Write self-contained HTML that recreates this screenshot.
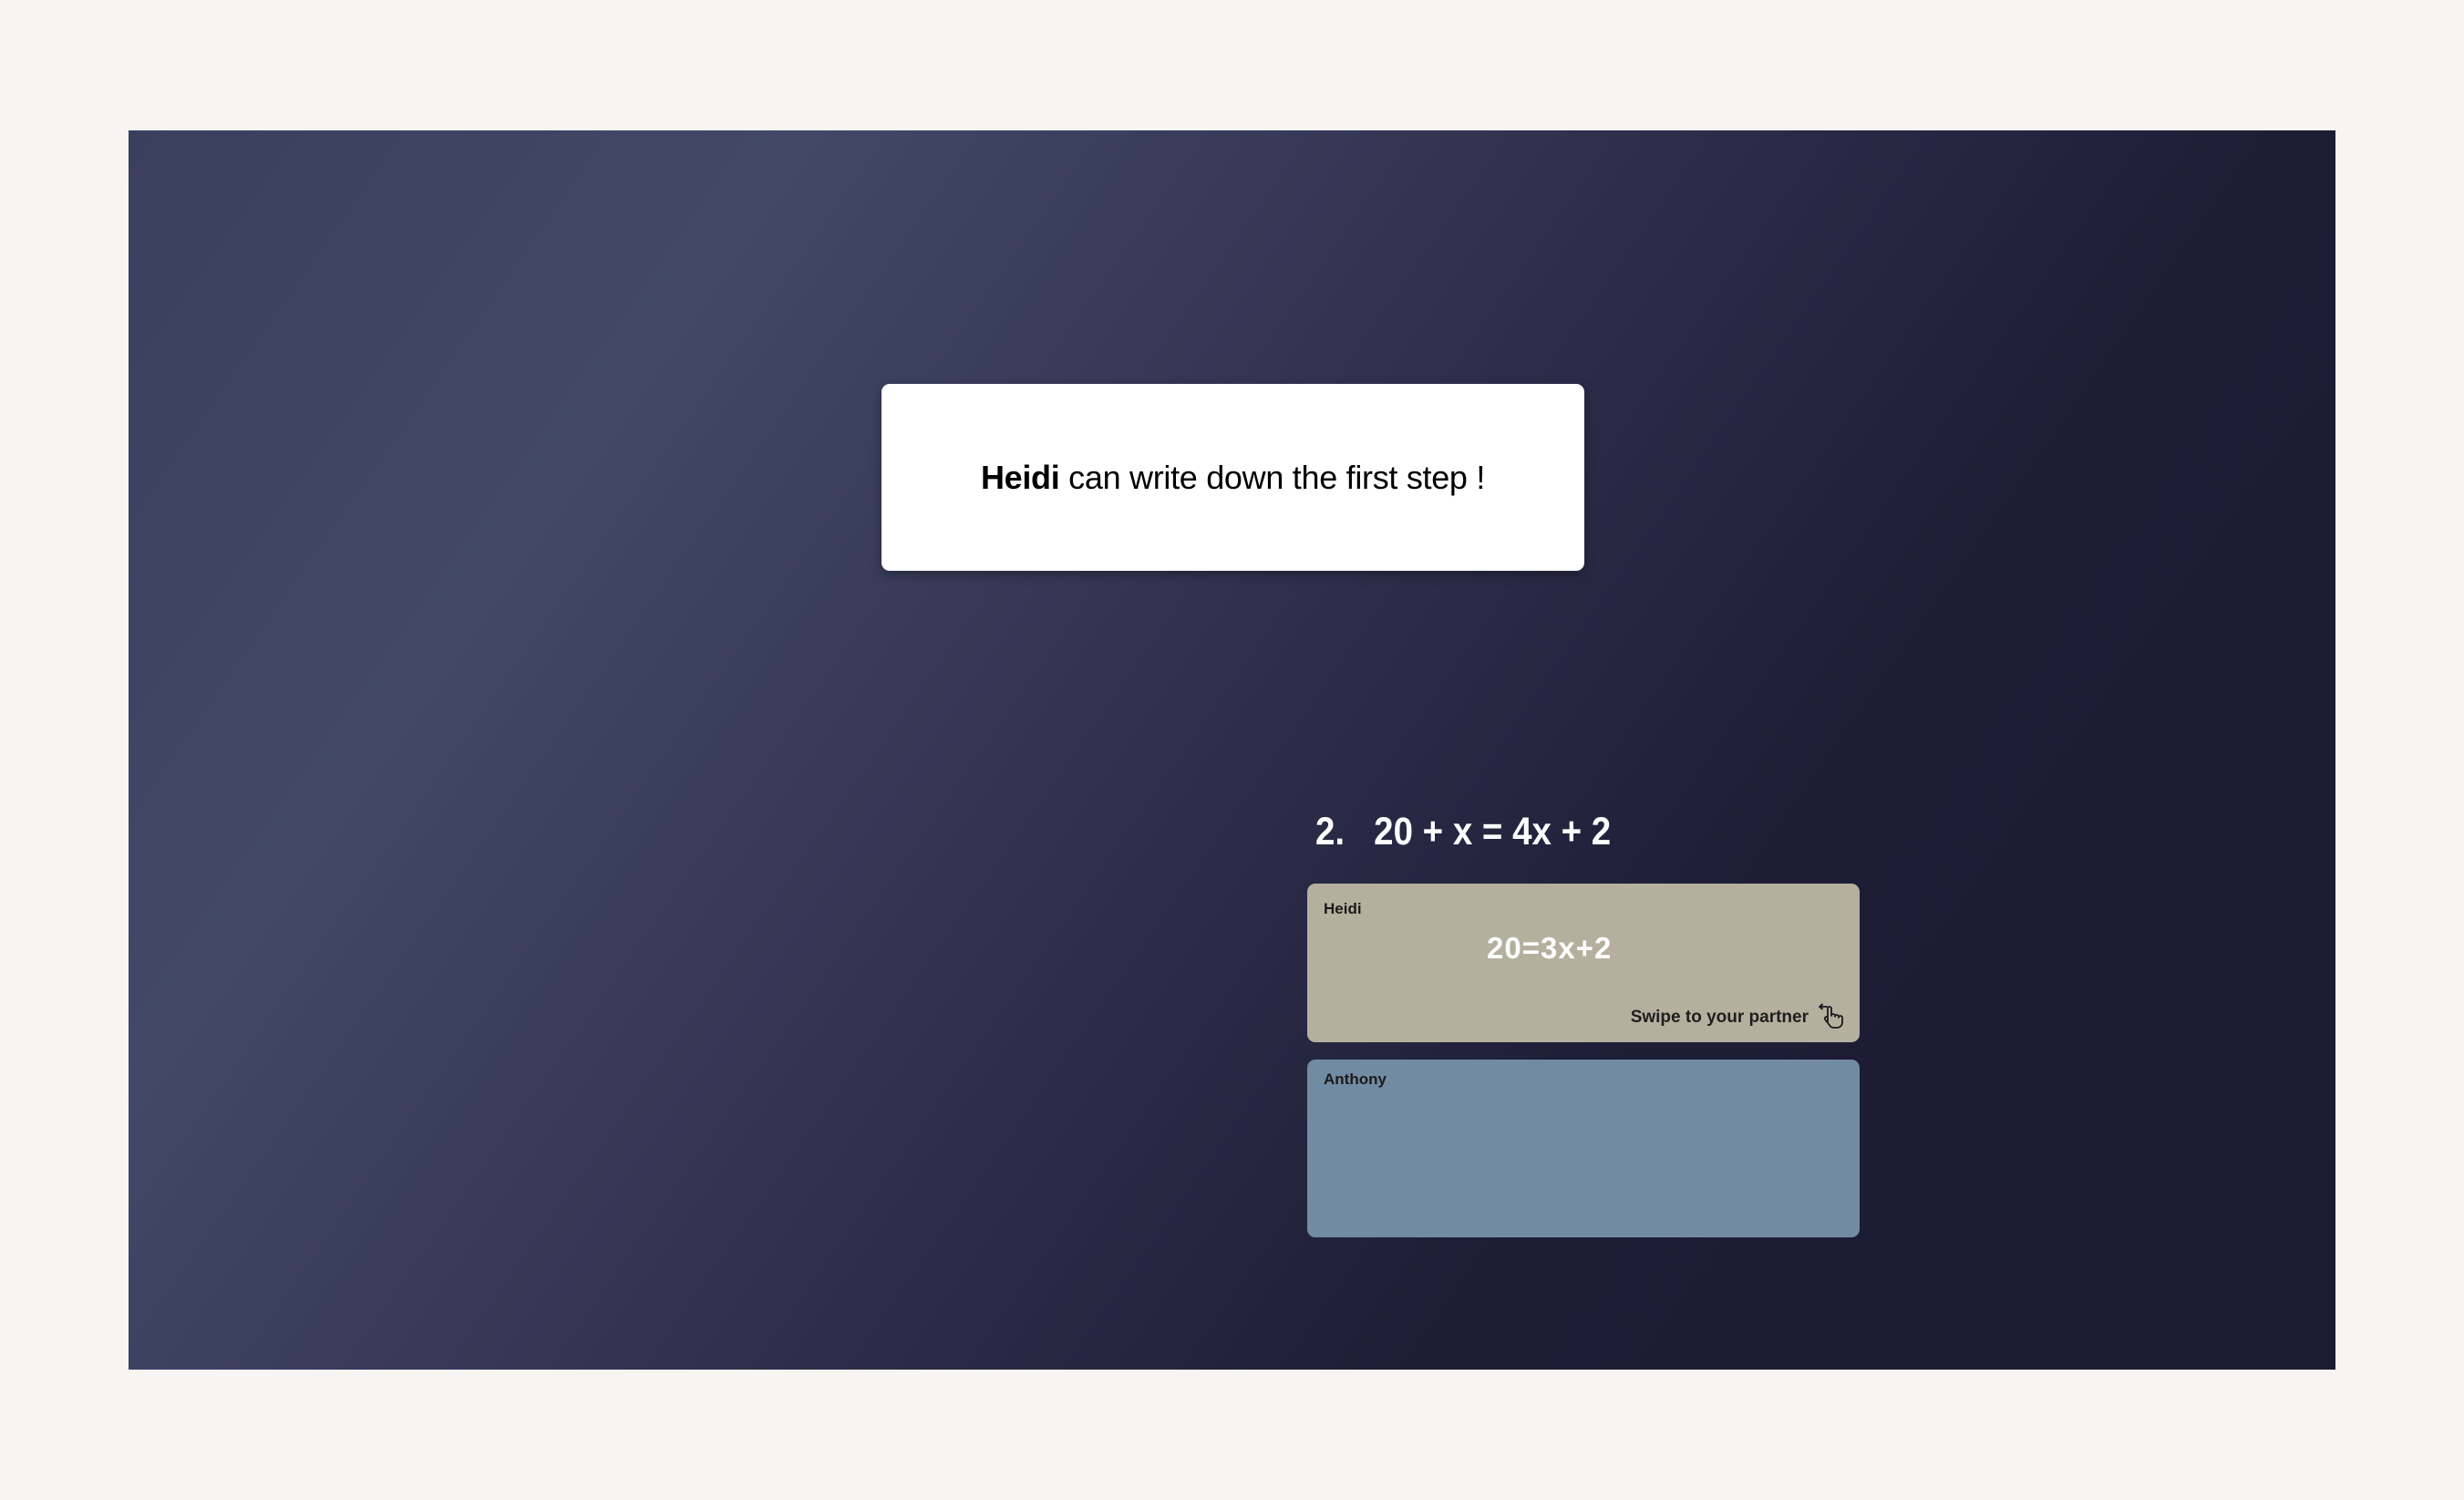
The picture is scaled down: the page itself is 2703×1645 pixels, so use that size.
<!DOCTYPE html>
<html><head><meta charset="utf-8"><style>
html,body{margin:0;padding:0;width:2703px;height:1645px;overflow:hidden;background:#f8f4f3;font-family:"Liberation Sans",sans-serif}
.panel{position:absolute;left:141px;top:143px;width:2421px;height:1359px;background:linear-gradient(125deg,#3b3f5e 0%,#434868 22%,#2d2e4b 50%,#1e1d36 70%,#1c1b33 100%)}
.msg{position:absolute;left:967px;top:421px;width:771px;height:205px;background:#fff;border-radius:9px;box-shadow:0 4px 12px rgba(0,0,0,.3);display:flex;align-items:center;justify-content:center;font-size:36px;color:#000;letter-spacing:-0.3px}
.title{position:absolute;left:1443px;top:888px;font-size:43px;font-weight:bold;color:#fff;white-space:pre;transform:scaleX(0.895);transform-origin:left top}
.card{position:absolute;left:1434px;width:606px;border-radius:9px}
.lbl{position:absolute;left:18px;font-size:17px;font-weight:bold;color:#1a1a1a}
</style></head><body>
<div class="panel"></div>
<div class="msg"><span><b>Heidi</b> can write down the first step !</span></div>
<div class="title">2.   20 + x = 4x + 2</div>
<div class="card" style="top:969px;height:174px;background:#b5b09e">
  <div class="lbl" style="top:18px">Heidi</div>
  <div style="position:absolute;left:197px;top:52px;font-size:33px;color:#fff;letter-spacing:1px;font-weight:bold">20=3x+2</div>
  <div style="position:absolute;right:56px;top:136px;font-size:19px;font-weight:bold;color:#1e1e1e">Swipe to your partner</div>
  <svg style="position:absolute;left:560px;top:130px" width="32" height="32" viewBox="0 0 32 32" fill="none" stroke="#1a1a1a" stroke-width="1.8" stroke-linecap="round" stroke-linejoin="round">
    <path d="M10 5H2M2 5l3-2.5M2 5l3 2.5"/>
    <path d="M11 22V7a2 2 0 0 1 4 0v8a2 2 0 0 1 4 0v1a2 2 0 0 1 4 0v1a2 2 0 0 1 4 0v5c0 4-3 6-6 6h-3c-3 0-4-1-6-4l-4-5a2 2 0 0 1 3-2.5L11 19"/>
  </svg>
</div>
<div class="card" style="top:1162px;height:195px;background:#718ba3">
  <div class="lbl" style="top:12px">Anthony</div>
</div>
</body></html>
